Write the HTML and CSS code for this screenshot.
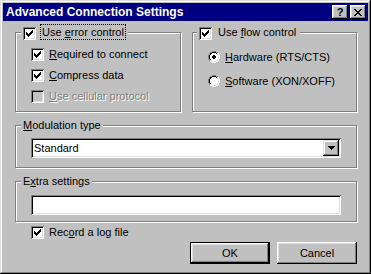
FILE: index.html
```html
<!DOCTYPE html>
<html>
<head>
<meta charset="utf-8">
<title>Advanced Connection Settings</title>
<link rel="stylesheet" href="styles.css">
</head>
<body>
<div class="window">
  <div class="titlebar">
    <span class="title">Advanced Connection Settings</span>
    <div class="tbtns">
      <span class="tbtn help">?</span>
      <span class="tbtn close"><svg width="8" height="7" viewBox="0 0 8 7" shape-rendering="crispEdges"><path fill="#000" d="M0 0h2v1h-2z M6 0h2v1h-2z M1 1h2v1h-2z M5 1h2v1h-2z M2 2h4v1h-4z M3 3h2v1h-2z M2 4h4v1h-4z M1 5h2v1h-2z M5 5h2v1h-2z M0 6h2v1h-2z M6 6h2v1h-2z"/></svg></span>
    </div>
  </div>
  <div class="body">
    <div class="toprow">
      <div class="group">
        <div class="legend legend-cb">
          <span class="cb"><svg width="13" height="13" viewBox="0 0 13 13" shape-rendering="crispEdges"><path fill="#000" d="M3 5h1v3h-1z M4 6h1v3h-1z M5 7h1v3h-1z M6 6h1v3h-1z M7 5h1v3h-1z M8 4h1v3h-1z M9 3h1v3h-1z"/></svg></span>
          <span class="lbl focus">Use <u>e</u>rror control</span>
        </div>
        <div class="opts">
          <div class="opt">
            <span class="cb"><svg width="13" height="13" viewBox="0 0 13 13" shape-rendering="crispEdges"><path fill="#000" d="M3 5h1v3h-1z M4 6h1v3h-1z M5 7h1v3h-1z M6 6h1v3h-1z M7 5h1v3h-1z M8 4h1v3h-1z M9 3h1v3h-1z"/></svg></span>
            <span class="olbl"><u>R</u>equired to connect</span>
          </div>
          <div class="opt">
            <span class="cb"><svg width="13" height="13" viewBox="0 0 13 13" shape-rendering="crispEdges"><path fill="#000" d="M3 5h1v3h-1z M4 6h1v3h-1z M5 7h1v3h-1z M6 6h1v3h-1z M7 5h1v3h-1z M8 4h1v3h-1z M9 3h1v3h-1z"/></svg></span>
            <span class="olbl"><u>C</u>ompress data</span>
          </div>
          <div class="opt disabled">
            <span class="cb"></span>
            <span class="olbl"><u>U</u>se cellular protocol</span>
          </div>
        </div>
      </div>
      <div class="group">
        <div class="legend legend-cb legend-tight">
          <span class="cb"><svg width="13" height="13" viewBox="0 0 13 13" shape-rendering="crispEdges"><path fill="#000" d="M3 5h1v3h-1z M4 6h1v3h-1z M5 7h1v3h-1z M6 6h1v3h-1z M7 5h1v3h-1z M8 4h1v3h-1z M9 3h1v3h-1z"/></svg></span>
          <span class="lbl">Use <u>f</u>low control</span>
        </div>
        <div class="radios">
          <div class="opt radio-row">
            <svg class="radio" width="12" height="12" viewBox="0 0 12 12" shape-rendering="crispEdges">
              <path fill="#fff" d="M4 2h4v1h-4z M3 3h6v1h-6z M2 4h8v4h-8z M3 8h6v1h-6z M4 9h4v1h-4z"/>
              <path fill="#808080" d="M4 0h4v1h-4z M2 1h2v1h-2z M8 1h2v1h-2z M1 2h1v2h-1z M0 4h1v4h-1z M1 8h1v2h-1z"/>
              <path fill="#fff" d="M10 2h1v2h-1z M11 4h1v4h-1z M10 8h1v2h-1z M2 10h2v1h-2z M8 10h2v1h-2z M4 11h4v1h-4z"/>
              <path fill="#000" d="M4 1h4v1h-4z M2 2h2v1h-2z M8 2h1v1h-1z M2 3h1v1h-1z M1 4h1v4h-1z M2 8h1v1h-1z"/>
              <path fill="#dfdfdf" d="M9 2h1v2h-1z M10 4h1v4h-1z M9 8h1v1h-1z M2 9h2v1h-2z M8 9h2v1h-2z M4 10h4v1h-4z"/>
              <path fill="#000" d="M5 4h2v1h-2z M4 5h4v2h-4z M5 7h2v1h-2z"/>
            </svg>
            <span class="olbl"><u>H</u>ardware (RTS/CTS)</span>
          </div>
          <div class="opt radio-row">
            <svg class="radio" width="12" height="12" viewBox="0 0 12 12" shape-rendering="crispEdges">
              <path fill="#fff" d="M4 2h4v1h-4z M3 3h6v1h-6z M2 4h8v4h-8z M3 8h6v1h-6z M4 9h4v1h-4z"/>
              <path fill="#808080" d="M4 0h4v1h-4z M2 1h2v1h-2z M8 1h2v1h-2z M1 2h1v2h-1z M0 4h1v4h-1z M1 8h1v2h-1z"/>
              <path fill="#fff" d="M10 2h1v2h-1z M11 4h1v4h-1z M10 8h1v2h-1z M2 10h2v1h-2z M8 10h2v1h-2z M4 11h4v1h-4z"/>
              <path fill="#000" d="M4 1h4v1h-4z M2 2h2v1h-2z M8 2h1v1h-1z M2 3h1v1h-1z M1 4h1v4h-1z M2 8h1v1h-1z"/>
              <path fill="#dfdfdf" d="M9 2h1v2h-1z M10 4h1v4h-1z M9 8h1v1h-1z M2 9h2v1h-2z M8 9h2v1h-2z M4 10h4v1h-4z"/>
            </svg>
            <span class="olbl"><u>S</u>oftware (XON/XOFF)</span>
          </div>
        </div>
      </div>
    </div>

    <div class="group wide">
      <div class="legend legend-txt"><u>M</u>odulation type</div>
      <div class="field combo">
        <span class="combo-val">Standard</span>
        <span class="combo-btn"><svg width="7" height="4" viewBox="0 0 7 4" shape-rendering="crispEdges"><path fill="#000" d="M0 0h7v1h-7z M1 1h5v1h-5z M2 2h3v1h-3z M3 3h1v1h-1z"/></svg></span>
      </div>
    </div>

    <div class="group wide">
      <div class="legend legend-txt">E<u>x</u>tra settings</div>
      <div class="field textbox"></div>
    </div>

    <div class="opt logrow">
      <span class="cb"><svg width="13" height="13" viewBox="0 0 13 13" shape-rendering="crispEdges"><path fill="#000" d="M3 5h1v3h-1z M4 6h1v3h-1z M5 7h1v3h-1z M6 6h1v3h-1z M7 5h1v3h-1z M8 4h1v3h-1z M9 3h1v3h-1z"/></svg></span>
      <span class="olbl">Rec<u>o</u>rd a log file</span>
    </div>

    <div class="buttons">
      <span class="btn default">OK</span>
      <span class="btn">Cancel</span>
    </div>
  </div>
</div>
</body>
</html>
```

FILE: styles.css
```css
* {
  box-sizing: border-box;
}

html,
body {
  margin: 0;
  padding: 0;
}

body {
  width: 371px;
  height: 274px;
  overflow: hidden;
  background: #c0c0c0;
  font-family: "Liberation Sans", Arial, sans-serif;
  font-size: 11px;
  color: #000;
}

u {
  text-decoration: underline;
  text-underline-offset: 1px;
}

.window {
  width: 371px;
  height: 274px;
  padding: 3px;
  display: flex;
  flex-direction: column;
  background: #c0c0c0;
  box-shadow: inset -1px -1px #000, inset 1px 1px #dfdfdf, inset -2px -2px #808080, inset 2px 2px #fff;
}

.titlebar {
  height: 18px;
  flex: none;
  display: flex;
  align-items: center;
  justify-content: space-between;
  padding: 0 2px 0 3px;
  background: #000080;
  color: #fff;
}

.title {
  font-weight: bold;
  font-size: 12px;
  line-height: 18px;
  white-space: nowrap;
}

.tbtns {
  display: flex;
  gap: 2px;
}

.tbtn {
  width: 16px;
  height: 14px;
  display: flex;
  align-items: center;
  justify-content: center;
  background: #c0c0c0;
  color: #000;
  font-weight: bold;
  font-size: 11px;
  line-height: 14px;
  box-shadow: inset -1px -1px #000, inset 1px 1px #fff, inset -2px -2px #808080, inset 2px 2px #dfdfdf;
}

.tbtn svg {
  display: block;
}

.body {
  flex: 1;
  display: flex;
  flex-direction: column;
  padding: 0 11px 0 12px;
}

.toprow {
  display: grid;
  grid-template-columns: 166px 165px;
  column-gap: 11px;
  margin-top: 11px;
}

.group {
  display: flex;
  flex-direction: column;
  border: 1px solid #808080;
  box-shadow: inset 1px 1px #fff, 1px 1px #fff;
}

.legend {
  align-self: flex-start;
  display: flex;
  background: #c0c0c0;
  margin-left: 5px;
  padding: 0 2px;
  white-space: nowrap;
}

.legend-tight {
  margin-left: 4px;
}

.legend-cb {
  height: 16px;
  margin-top: -9px;
  align-items: flex-end;
}

.legend-txt {
  height: 13px;
  line-height: 13px;
  margin-top: -7px;
}

.lbl {
  margin-left: 4px;
  padding: 0 1px;
  border: 1px dotted transparent;
  line-height: 14px;
}

.lbl.focus {
  border-color: #000;
}

.cb {
  width: 13px;
  height: 13px;
  flex: none;
  display: block;
  background: #fff;
  box-shadow: inset 1px 1px #808080, inset -1px -1px #fff, inset 2px 2px #000, inset -2px -2px #dfdfdf;
}

.cb svg {
  display: block;
}

.opts {
  display: flex;
  flex-direction: column;
  gap: 8px;
  padding: 8px 0 8px 15px;
}

.opt {
  display: flex;
  align-items: center;
  height: 13px;
}

.olbl {
  margin-left: 5px;
  line-height: 13px;
  white-space: nowrap;
}

.disabled .cb {
  background: #c0c0c0;
}

.disabled .olbl {
  color: #808080;
  text-shadow: 1px 1px 0 #fff;
}

.radios {
  display: flex;
  flex-direction: column;
  gap: 12px;
  padding: 11px 0 0 15px;
}

.radio-row {
  height: 12px;
}

.radio {
  display: block;
  flex: none;
}

.wide {
  margin-top: 13px;
}

.field {
  height: 20px;
  margin: 6px 15px 9px;
  background: #fff;
  box-shadow: inset 1px 1px #808080, inset -1px -1px #fff, inset 2px 2px #000, inset -2px -2px #dfdfdf;
}

.textbox {
  margin: 7px 15px 6px;
}

.combo {
  display: flex;
  padding: 2px;
}

.combo-val {
  flex: 1;
  padding-left: 1px;
  line-height: 16px;
}

.combo-btn {
  width: 16px;
  height: 16px;
  display: flex;
  align-items: center;
  justify-content: center;
  background: #c0c0c0;
  box-shadow: inset -1px -1px #000, inset 1px 1px #dfdfdf, inset -2px -2px #808080, inset 2px 2px #fff;
}

.combo-btn svg {
  display: block;
}

.logrow {
  margin: 4px 0 0 16px;
}

.buttons {
  display: flex;
  justify-content: flex-end;
  gap: 7px;
  margin-top: 3px;
}

.btn {
  width: 80px;
  height: 22px;
  display: flex;
  align-items: center;
  justify-content: center;
  background: #c0c0c0;
  box-shadow: inset -1px -1px #000, inset 1px 1px #fff, inset -2px -2px #808080, inset 2px 2px #dfdfdf;
}

.btn.default {
  border: 1px solid #000;
}
```
